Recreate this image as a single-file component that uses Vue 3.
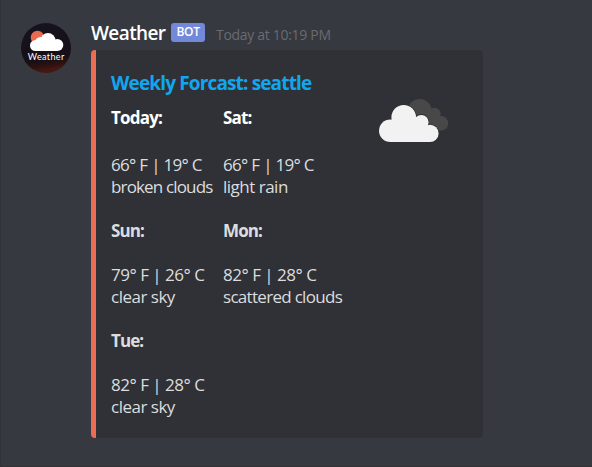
<script setup>
const forecast = [
  { day: 'Today:', temp: '66° F | 19° C', sky: 'broken clouds' },
  { day: 'Sat:', temp: '66° F | 19° C', sky: 'light rain' },
  { day: 'Sun:', temp: '79° F | 26° C', sky: 'clear sky' },
  { day: 'Mon:', temp: '82° F | 28° C', sky: 'scattered clouds' },
  { day: 'Tue:', temp: '82° F | 28° C', sky: 'clear sky' },
]
</script>

<template>
  <main class="chat">
    <svg class="avatar" viewBox="0 0 50 50" role="img">
      <defs>
        <linearGradient id="night" x1="0" y1="0" x2="0.15" y2="1">
          <stop offset="0" stop-color="#16131f" />
          <stop offset="0.78" stop-color="#160f17" />
          <stop offset="0.9" stop-color="#2c110f" />
          <stop offset="1" stop-color="#451712" />
        </linearGradient>
      </defs>
      <circle cx="25" cy="25" r="25" fill="url(#night)" />
      <circle cx="16.5" cy="14.5" r="6.8" fill="#e86b4f" />
      <g fill="#fff">
        <circle cx="14.500" cy="22.500" r="5.500" />
        <circle cx="19.500" cy="19.500" r="5.500" />
        <circle cx="27" cy="17.500" r="7.500" />
        <circle cx="36.300" cy="22" r="6" />
        <rect x="14.500" y="19" width="22" height="9" />
      </g>
      <text class="avatar-name" x="25" y="37.300" text-anchor="middle" textLength="36.500">Weather</text>
    </svg>

    <section class="message">
      <header class="heading">
        <span class="author">Weather</span>
        <span class="tag">BOT</span>
        <time class="stamp">Today at 10:19 PM</time>
      </header>
      <article class="embed">
        <div class="content">
          <h1 class="title">Weekly Forcast: seattle</h1>
          <div class="grid">
            <div v-for="(f, i) in forecast" :key="f.day" class="field" :class="{ first: i < 2 }">
              <strong class="day">{{ f.day }}</strong>
              <span class="temp">{{ f.temp }}</span>
              <span class="sky" :class="{ long: f.sky.length > 12 }">{{ f.sky }}</span>
            </div>
          </div>
        </div>
        <svg class="clouds" viewBox="379 98 71 45">
          <g fill="#484848">
            <circle cx="419.700" cy="111" r="12" />
            <circle cx="434.300" cy="114" r="6.300" />
            <circle cx="441" cy="123.300" r="7.300" />
            <path d="M420 110L434 112L441 130.600H425Z" />
          </g>
          <g class="front">
            <circle cx="390.300" cy="130.700" r="11.300" />
            <circle cx="403.700" cy="117.300" r="12.300" />
            <circle cx="421.300" cy="122.200" r="7.300" />
            <circle cx="430" cy="133.400" r="8.600" />
          </g>
          <g fill="#f2f2f2">
            <circle cx="390.300" cy="130.700" r="11.300" />
            <circle cx="403.700" cy="117.300" r="12.300" />
            <circle cx="421.300" cy="122.200" r="7.300" />
            <circle cx="430" cy="133.400" r="8.600" />
            <path d="M390.300 142V125L404 117L421 121L430 127V142Z" />
          </g>
        </svg>
      </article>
    </section>
  </main>
</template>

<style>
body {
  margin: 0;
  background: #36393f;
}
</style>

<style scoped>
.chat {
  box-sizing: border-box;
  width: 592px;
  height: 467px;
  padding: 22px 0 0 20px;
  border-left: 1px solid #303238;
  border-bottom: 1px solid #303238;
  background: #36393f;
  display: flex;
  align-items: flex-start;
  gap: 20px;
  overflow: hidden;
  font-family: "Open Sans", "Noto Sans", sans-serif;
  white-space: nowrap;
}
.avatar {
  width: 50px;
  height: 50px;
  flex: none;
  margin-top: 1px;
}
.avatar-name {
  font: 400 9px Lato, sans-serif;
  fill: #fff;
}
.heading {
  height: 28px;
  display: flex;
  align-items: flex-start;
}
.author {
  width: 80px;
  font-size: 19px;
  font-weight: 600;
  line-height: 23px;
  letter-spacing: -0.6px;
  color: #fff;
}
.tag {
  box-sizing: border-box;
  width: 34px;
  height: 19px;
  margin-top: 1px;
  border-radius: 3px;
  background: #7289da;
  color: #fff;
  font-size: 12px;
  font-weight: 600;
  line-height: 18px;
  letter-spacing: -0.3px;
  text-align: center;
}
.stamp {
  margin-left: 11px;
  font-size: 14px;
  line-height: 26px;
  letter-spacing: -0.3px;
  color: #686b71;
}
.embed {
  box-sizing: border-box;
  width: 392px;
  height: 388px;
  padding: 21px 33px 0 15px;
  border-left: 5px solid #ec6d53;
  border-radius: 4px;
  background: #2f3136;
  display: flex;
  justify-content: space-between;
}
.title {
  margin: 0;
  font-size: 19px;
  font-weight: 700;
  line-height: 24px;
  letter-spacing: -0.85px;
  color: #12a6ee;
}
.grid {
  margin-top: 12px;
  display: grid;
  grid-template-columns: 112px 130px;
  row-gap: 22px;
}
.field {
  display: flex;
  flex-direction: column;
  font-size: 17px;
  line-height: 22px;
  color: #dcddde;
}
.day {
  margin-bottom: 22px;
  font-weight: 700;
  letter-spacing: -0.9px;
}
.first .day {
  margin-bottom: 25px;
  letter-spacing: -0.8px;
  color: #fff;
}
.temp {
  letter-spacing: -0.5px;
}
.first .temp {
  letter-spacing: -0.7px;
}
.sky {
  letter-spacing: -0.5px;
}
.sky.long {
  letter-spacing: -0.7px;
}
.first .sky.long {
  letter-spacing: -0.85px;
}
.clouds {
  width: 71px;
  height: 45px;
  flex: none;
  margin: 27px 0 0;
}
.front {
  fill: #303136;
  stroke: #303136;
  stroke-width: 1.6px;
}
</style>
